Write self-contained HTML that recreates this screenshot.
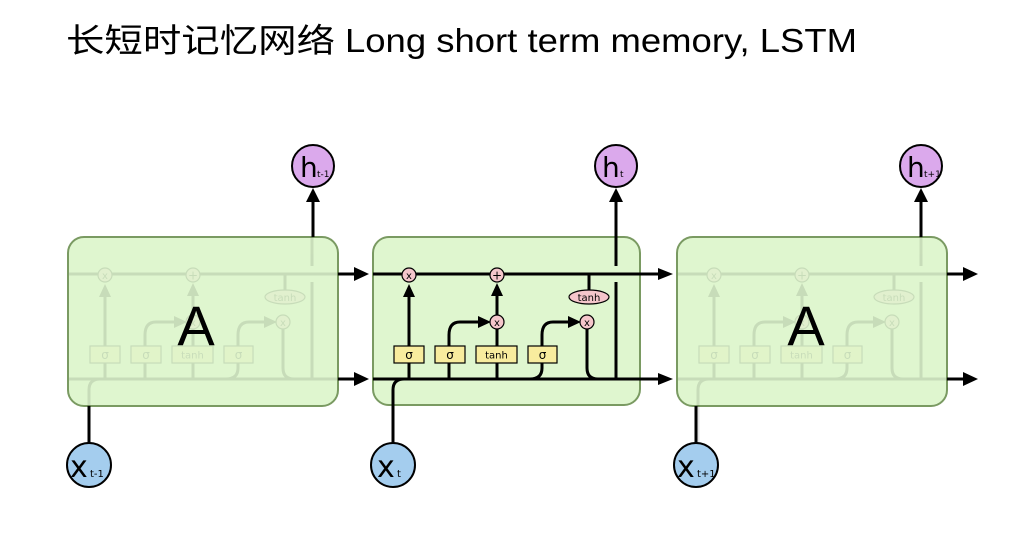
<!DOCTYPE html>
<html><head><meta charset="utf-8"><style>
html,body{margin:0;padding:0;background:#fff;width:1027px;height:557px;overflow:hidden}
svg{display:block}
</style></head><body>
<svg width="1027" height="557" viewBox="0 0 1027 557" xmlns="http://www.w3.org/2000/svg">
<defs>
<g id="inner">
  <!-- cell lines -->
  <path d="M373 274 H660" stroke="#000" stroke-width="3" fill="none"/>
  <path d="M373 379 H660" stroke="#000" stroke-width="3" fill="none"/>
  <path d="M393 443 V390 Q393 379 404 379" stroke="#000" stroke-width="3" fill="none"/>
  <path d="M409 379 V296" stroke="#000" stroke-width="3" fill="none"/>
  <path d="M403 297 L409 284 L415 297 Z" fill="#000"/>
  <path d="M449 379 V335 Q449 322 460 322 H480" stroke="#000" stroke-width="3" fill="none"/>
  <path d="M478 316 L491 322 L478 328 Z" fill="#000"/>
  <path d="M497 379 V329" stroke="#000" stroke-width="3" fill="none"/>
  <path d="M497 315 V295" stroke="#000" stroke-width="3" fill="none"/>
  <path d="M491 296 L497 283 L503 296 Z" fill="#000"/>
  <path d="M530 379 Q542 379 542 368 V335 Q542 322 553 322 H570" stroke="#000" stroke-width="3" fill="none"/>
  <path d="M568 316 L581 322 L568 328 Z" fill="#000"/>
  <path d="M589 274 V292" stroke="#000" stroke-width="3" fill="none"/>
  <path d="M587 329 V368 Q587 379 598 379" stroke="#000" stroke-width="3" fill="none"/>
  <path d="M616 379 V282" stroke="#000" stroke-width="3" fill="none"/>
  <path d="M616 266 V237" stroke="#000" stroke-width="3" fill="none"/>
  <!-- ops -->
  <circle cx="409" cy="275" r="7" fill="#f5c6cb" stroke="#000" stroke-width="1.2"/>
  <text x="409" y="279" font-family="DejaVu Sans, sans-serif" font-size="10" text-anchor="middle">x</text>
  <circle cx="497" cy="275" r="7" fill="#f5c6cb" stroke="#000" stroke-width="1.2"/>
  <text x="497" y="279.5" font-family="DejaVu Sans, sans-serif" font-size="12" text-anchor="middle">+</text>
  <circle cx="497" cy="322" r="7" fill="#f5c6cb" stroke="#000" stroke-width="1.2"/>
  <text x="497" y="326" font-family="DejaVu Sans, sans-serif" font-size="10" text-anchor="middle">x</text>
  <circle cx="587" cy="322" r="7" fill="#f5c6cb" stroke="#000" stroke-width="1.2"/>
  <text x="587" y="326" font-family="DejaVu Sans, sans-serif" font-size="10" text-anchor="middle">x</text>
  <ellipse cx="589" cy="297" rx="20" ry="7" fill="#f5c6cb" stroke="#000" stroke-width="1.2"/>
  <text x="589" y="301" font-family="DejaVu Sans, sans-serif" font-size="10" text-anchor="middle">tanh</text>
  <!-- gates -->
  <rect x="394" y="346" width="30" height="17" fill="#f8ec9e" stroke="#000" stroke-width="1.2"/>
  <text x="409" y="359" font-family="DejaVu Sans, sans-serif" font-size="12" text-anchor="middle">σ</text>
  <rect x="435" y="346" width="30" height="17" fill="#f8ec9e" stroke="#000" stroke-width="1.2"/>
  <text x="450" y="359" font-family="DejaVu Sans, sans-serif" font-size="12" text-anchor="middle">σ</text>
  <rect x="476" y="346" width="41" height="17" fill="#f8ec9e" stroke="#000" stroke-width="1.2"/>
  <text x="496.5" y="358.5" font-family="DejaVu Sans, sans-serif" font-size="10" text-anchor="middle">tanh</text>
  <rect x="528" y="346" width="29" height="17" fill="#f8ec9e" stroke="#000" stroke-width="1.2"/>
  <text x="542.5" y="359" font-family="DejaVu Sans, sans-serif" font-size="12" text-anchor="middle">σ</text>
</g>
</defs>

<text x="66" y="52" font-family="Noto Sans CJK SC, sans-serif" font-size="33" textLength="269" lengthAdjust="spacingAndGlyphs">长短时记忆网络</text>
<text x="345" y="52" font-family="Liberation Sans, sans-serif" font-size="33" textLength="512" lengthAdjust="spacingAndGlyphs">Long short term memory, LSTM</text>

<!-- middle box -->
<rect x="373" y="237" width="267" height="168" rx="16" fill="#dff6cf" stroke="#7a9a62" stroke-width="2"/>
<use href="#inner"/>
<path d="M616 237 V200" stroke="#000" stroke-width="3"/>
<path d="M609 202 L616 188 L623 202 Z" fill="#000"/>
<path d="M658 268 L673 274 L658 280 Z" fill="#000"/>
<path d="M658 373 L673 379 L658 385 Z" fill="#000"/>

<!-- box1 -->
<rect x="68" y="237" width="270" height="169" rx="16" fill="#dff6cf" stroke="#7a9a62" stroke-width="2"/>
<g opacity="0.1" transform="translate(-304 0)"><use href="#inner"/></g>
<text x="196" y="345" font-family="Liberation Sans, sans-serif" font-size="56" text-anchor="middle">A</text>
<path d="M338 274 H356 M338 379 H356" stroke="#000" stroke-width="3"/>
<path d="M354 267 L369 274 L354 281 Z M354 372 L369 379 L354 386 Z" fill="#000"/>
<path d="M313 237 V200" stroke="#000" stroke-width="3"/>
<path d="M306 202 L313 188 L320 202 Z" fill="#000"/>
<path d="M89 406 V443" stroke="#000" stroke-width="3"/>

<!-- box3 -->
<rect x="677" y="237" width="270" height="169" rx="16" fill="#dff6cf" stroke="#7a9a62" stroke-width="2"/>
<g opacity="0.1" transform="translate(305 0)"><use href="#inner"/></g>
<text x="806" y="345" font-family="Liberation Sans, sans-serif" font-size="56" text-anchor="middle">A</text>
<path d="M947 274 H965 M947 379 H965" stroke="#000" stroke-width="3"/>
<path d="M963 267 L978 274 L963 281 Z M963 372 L978 379 L963 386 Z" fill="#000"/>
<path d="M921 237 V200" stroke="#000" stroke-width="3"/>
<path d="M914 202 L921 188 L928 202 Z" fill="#000"/>
<path d="M696 406 V443" stroke="#000" stroke-width="3"/>

<!-- h circles -->
<g font-family="DejaVu Sans, sans-serif">
<circle cx="313" cy="166" r="21" fill="#dba9ec" stroke="#000" stroke-width="2"/>
<text x="300" y="177" font-size="28">h</text><text x="317" y="177" font-size="9">t-1</text>
<circle cx="616" cy="166" r="21" fill="#dba9ec" stroke="#000" stroke-width="2"/>
<text x="602" y="177" font-size="28">h</text><text x="620" y="177" font-size="9">t</text>
<circle cx="921" cy="166" r="21" fill="#dba9ec" stroke="#000" stroke-width="2"/>
<text x="907" y="177" font-size="28">h</text><text x="924" y="177" font-size="9">t+1</text>
<!-- x circles -->
<circle cx="89" cy="465" r="22" fill="#a4cdee" stroke="#000" stroke-width="2"/>
<text x="70" y="477" font-size="30">x</text><text x="90" y="477" font-size="10">t-1</text>
<circle cx="393" cy="465" r="22" fill="#a4cdee" stroke="#000" stroke-width="2"/>
<text x="377" y="477" font-size="30">x</text><text x="397" y="477" font-size="10">t</text>
<circle cx="696" cy="465" r="22" fill="#a4cdee" stroke="#000" stroke-width="2"/>
<text x="677" y="477" font-size="30">x</text><text x="697" y="477" font-size="10">t+1</text>
</g>
</svg>
</body></html>
